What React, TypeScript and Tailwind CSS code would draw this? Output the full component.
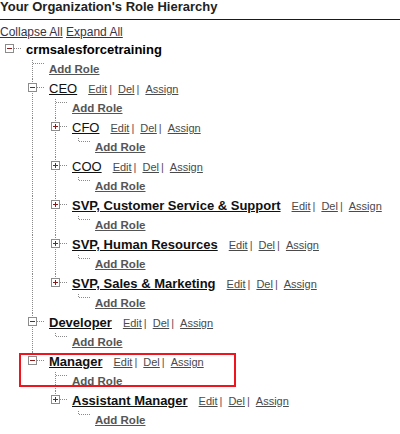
import React from 'react';

type RoleNode = {
  name: string;
  open?: boolean;
  plain?: boolean;
  mark?: boolean;
  kids: (RoleNode | 'add')[];
};

const tree: RoleNode = {
  name: 'crmsalesforcetraining',
  open: true,
  kids: [
    'add',
    {
      name: 'CEO',
      open: true,
      plain: true,
      kids: [
        'add',
        { name: 'CFO', plain: true, kids: ['add'] },
        { name: 'COO', plain: true, kids: ['add'] },
        { name: 'SVP, Customer Service & Support', kids: ['add'] },
        { name: 'SVP, Human Resources', kids: ['add'] },
        { name: 'SVP, Sales & Marketing', kids: ['add'] },
      ],
    },
    { name: 'Developer', open: true, kids: ['add'] },
    {
      name: 'Manager',
      open: true,
      mark: true,
      kids: ['add', { name: 'Assistant Manager', kids: ['add'] }],
    },
  ],
};

const DOT = '#8a8a8a';

// one guide column: a dotted line straight through the row
function Guide({ on, h }: { on: boolean; h: number }) {
  return (
    <svg width={23} height={h} className="shrink-0" shapeRendering="crispEdges">
      {on && <line x1={9.5} y1={0} x2={9.5} y2={h} stroke={DOT} strokeDasharray="1 1" />}
    </svg>
  );
}

// the elbow joining a row to its parent, with the +/- box on node rows
function Elbow({ h, cy, last, top, box }: { h: number; cy: number; last: boolean; top: boolean; box?: 'plus' | 'minus' }) {
  return (
    <svg width={23} height={h} className="shrink-0" shapeRendering="crispEdges">
      {!top && <line x1={9.5} y1={0} x2={9.5} y2={last ? cy + 1 : h} stroke={DOT} strokeDasharray="1 1" />}
      <line x1={10} y1={cy + 0.5} x2={21} y2={cy + 0.5} stroke={DOT} strokeDasharray="1 1" />
      {box && (
        <g>
          <rect x={5.5} y={cy - 3.5} width={8} height={8} fill="#fff" stroke="#8c8c8c" />
          <line x1={7} y1={cy + 0.5} x2={12} y2={cy + 0.5} stroke="#8b1a1a" />
          {box === 'plus' && <line x1={9.5} y1={cy - 2} x2={9.5} y2={cy + 3} stroke="#8b1a1a" />}
        </g>
      )}
    </svg>
  );
}

function Actions() {
  return (
    <span className="ml-[11px] flex items-baseline text-[11px] text-[#4a4a4a]">
      <a className="underline">Edit</a>
      <span className="ml-[2px] mr-[6px] text-[#5a4a58]">|</span>
      <a className="underline">Del</a>
      <span className="ml-[2px] mr-[6px] text-[#5a4a58]">|</span>
      <a className="underline">Assign</a>
    </span>
  );
}

function AddRow({ guides, last }: { guides: boolean[]; last: boolean }) {
  return (
    <div className="flex h-[19px]">
      {guides.map((g, i) => (
        <Guide key={i} on={g} h={19} />
      ))}
      <Elbow h={19} cy={3} last={last} top={false} />
      <div className="pl-[3px] text-[11.5px] font-bold leading-[19px] text-[#555] whitespace-nowrap">
        <a className="underline">Add Role</a>
      </div>
    </div>
  );
}

function Branch({ node, depth, guides, last }: { node: RoleNode; depth: number; guides: boolean[]; last: boolean }) {
  const kidGuides = [...guides, depth === 0 ? false : !last];
  const rows = (
    <>
      <div className="flex h-[20px]">
        {guides.map((g, i) => (
          <Guide key={i} on={g} h={20} />
        ))}
        <Elbow h={20} cy={8} last={last} top={depth === 0} box={node.open ? 'minus' : 'plus'} />
        <div className="flex items-baseline pl-[3px] leading-[20px] whitespace-nowrap">
          {depth === 0 ? (
            <span className="text-[13px] font-bold text-black">{node.name}</span>
          ) : (
            <>
              <a className={`text-[13px] text-[#111] underline ${node.plain ? 'font-normal' : 'font-bold'}`}>{node.name}</a>
              <Actions />
            </>
          )}
        </div>
      </div>
      {node.kids.map((k, i) => {
        const isLast = i === node.kids.length - 1;
        return k === 'add' ? (
          <AddRow key={i} guides={kidGuides} last={isLast} />
        ) : (
          <Branch key={i} node={k} depth={depth + 1} guides={kidGuides} last={isLast} />
        );
      })}
    </>
  );

  if (!node.mark) return rows;
  return (
    <div className="relative">
      {rows}
      <div className="pointer-events-none absolute top-[1px] left-[19px] h-[34px] w-[217px] border-2 border-[#f0141e]" />
    </div>
  );
}

export default function App() {
  return (
    <div className="h-[434px] w-[400px] overflow-hidden bg-white font-['Liberation_Sans',Arial,sans-serif]">
      <div className="h-[20px] border-b border-[#1a1a1a] text-[13px] font-bold leading-[13px] text-[#222]">
        Your Organization's Role Hierarchy
      </div>
      <div className="h-[20px] pt-[2px] text-[12px] leading-[20px] text-[#3a3346]">
        <a className="underline">Collapse All</a> <a className="underline">Expand All</a>
      </div>
      <Branch node={tree} depth={0} guides={[]} last={true} />
    </div>
  );
}
